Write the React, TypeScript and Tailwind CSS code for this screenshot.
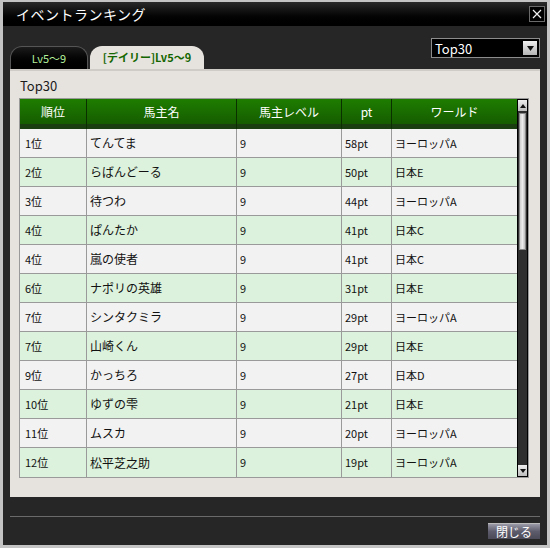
import React from "react";

type Row = { rank: string; name: string; level: string; pt: string; world: string };

const rows: Row[] = [
  { rank: "1位", name: "てんてま", level: "9", pt: "58pt", world: "ヨーロッパA" },
  { rank: "2位", name: "らばんどーる", level: "9", pt: "50pt", world: "日本E" },
  { rank: "3位", name: "待つわ", level: "9", pt: "44pt", world: "ヨーロッパA" },
  { rank: "4位", name: "ぱんたか", level: "9", pt: "41pt", world: "日本C" },
  { rank: "4位", name: "嵐の使者", level: "9", pt: "41pt", world: "日本C" },
  { rank: "6位", name: "ナポリの英雄", level: "9", pt: "31pt", world: "日本E" },
  { rank: "7位", name: "シンタクミラ", level: "9", pt: "29pt", world: "ヨーロッパA" },
  { rank: "7位", name: "山崎くん", level: "9", pt: "29pt", world: "日本E" },
  { rank: "9位", name: "かっちろ", level: "9", pt: "27pt", world: "日本D" },
  { rank: "10位", name: "ゆずの雫", level: "9", pt: "21pt", world: "日本E" },
  { rank: "11位", name: "ムスカ", level: "9", pt: "20pt", world: "ヨーロッパA" },
  { rank: "12位", name: "松平芝之助", level: "9", pt: "19pt", world: "ヨーロッパA" },
];

const headers = ["順位", "馬主名", "馬主レベル", "pt", "ワールド"];
const cols = "grid grid-cols-[66px_150px_105px_50px_126px]";
const font = { fontFamily: '"Noto Sans CJK JP", "Liberation Sans", sans-serif' };

export default function App() {
  return (
    <div
      className="w-[550px] h-[548px] bg-[#262626] border-x-[3px] border-t-[2px] border-b-[3px] border-[#c4c4c4] flex flex-col overflow-hidden"
      style={font}
    >
      {/* title bar */}
      <div className="h-[24px] shrink-0 bg-gradient-to-b from-[#2a2a2a] to-[#000] flex items-center justify-between pl-[13px] pr-[2px]">
        <span className="text-white text-[14px] leading-none tracking-[0.5px]">イベントランキング</span>
        <button className="w-[16px] h-[16px] border border-[#6a6a6a] bg-black flex items-center justify-center">
          <svg width="10" height="10" viewBox="0 0 10 10">
            <path d="M1 1L9 9M9 1L1 9" stroke="#f0f0f0" strokeWidth="1.2" />
          </svg>
        </button>
      </div>

      <div className="flex-1 flex flex-col px-[7px]">
        {/* tabs row */}
        <div className="h-[43px] shrink-0 flex justify-between">
          <div className="flex items-end gap-[2px]">
            <div className="w-[78px] h-[23px] rounded-t-[12px] border-t border-x border-[#555] bg-gradient-to-b from-[#1c1c1c] to-[#000] flex items-center justify-center">
              <span className="text-[#b4f09c] text-[11px] leading-none">Lv5〜9</span>
            </div>
            <div className="w-[114px] h-[23px] rounded-t-[12px] bg-[#e6e2de] flex items-center justify-center">
              <span className="text-[#136600] text-[11px] font-bold leading-none">[デイリー]Lv5〜9</span>
            </div>
          </div>
          <div className="mt-[12px] w-[109px] h-[20px] border border-[#8c8c8c] bg-black flex items-center justify-between pl-[3px] pr-[2px]">
            <span className="text-white text-[13px] leading-none">Top30</span>
            <div className="w-[14px] h-[14px] bg-gradient-to-b from-[#f0f0f0] to-[#b4b4b4] flex items-center justify-center">
              <svg width="7" height="5" viewBox="0 0 7 5">
                <path d="M0 0H7L3.5 5Z" fill="#111" />
              </svg>
            </div>
          </div>
        </div>

        {/* panel */}
        <div className="h-[428px] shrink-0 bg-[#e6e2de] border-t-2 border-[#cfcbc7] pl-[9px] pr-[11px] flex flex-col">
          <div className="h-[27px] flex items-center pl-[1px] text-[13px] text-[#1a1a1a] pt-[3px]">Top30</div>
          <div className="flex border border-[#9a9a9a]">
            <div className="flex flex-col">
              <div className={`${cols} h-[30px] bg-gradient-to-b from-[#1e7d00] to-[#145600]`}>
                {headers.map((h, i) => (
                  <div
                    key={h}
                    className={`flex flex-col ${i > 0 ? "border-l border-[#0b3000]" : ""}`}
                  >
                    <div className="flex-1 flex items-center justify-center text-white text-[12px] leading-none">{h}</div>
                    <div className="h-[5px] bg-[#1a3e10]" />
                  </div>
                ))}
              </div>
              {rows.map((r, idx) => (
                <div
                  key={idx}
                  className={`${cols} h-[29px] border-b border-[#9a9a9a] last:border-b-0 ${idx % 2 === 0 ? "bg-[#f2f2f2]" : "bg-[#dcf2dc]"}`}
                >
                  {[r.rank, r.name, r.level, r.pt, r.world].map((c, i) => (
                    <div
                      key={i}
                      className={`flex items-center text-[11px] text-[#111] leading-none ${i === 0 ? "pl-[5px]" : "pl-[3px] border-l border-[#9a9a9a]"} ${i === 1 ? "text-[12px]" : ""}`}
                    >
                      {c}
                    </div>
                  ))}
                </div>
              ))}
            </div>
            {/* scrollbar */}
            <div className="w-[12px] bg-[#2e2e2e] border border-black flex flex-col">
              <div className="h-[11px] bg-gradient-to-b from-[#eeeeee] to-[#bdbdbd] flex items-center justify-center">
                <svg width="6" height="4" viewBox="0 0 6 4">
                  <path d="M0 4H6L3 0Z" fill="#111" />
                </svg>
              </div>
              <div className="mx-[1px] mt-[2px] h-[137px] bg-gradient-to-r from-[#cfcfcf] via-[#ececec] to-[#bdbdbd] border border-[#888]" />
              <div className="flex-1" />
              <div className="h-[11px] bg-gradient-to-b from-[#eeeeee] to-[#bdbdbd] flex items-center justify-center">
                <svg width="6" height="4" viewBox="0 0 6 4">
                  <path d="M0 0H6L3 4Z" fill="#111" />
                </svg>
              </div>
            </div>
          </div>
        </div>

        {/* footer */}
        <div className="h-[20px] shrink-0 border-b border-[#6a6a6a]" />
        <div className="flex-1 flex justify-end items-start pt-[6px]">
          <button className="w-[52px] h-[16px] bg-gradient-to-b from-[#9a9aa8] via-[#5c5c6c] to-[#4a4a58] border-t border-[#bbb] flex items-center justify-center text-white text-[12px] leading-none">
            閉じる
          </button>
        </div>
      </div>
    </div>
  );
}
